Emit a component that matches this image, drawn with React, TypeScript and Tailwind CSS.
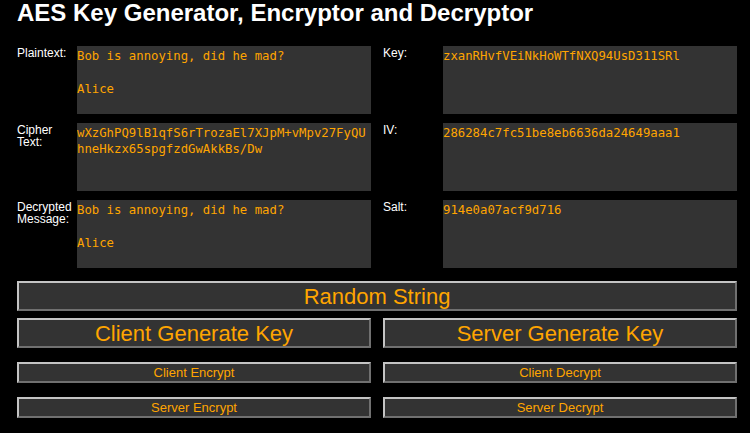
const FIELDS_LEFT = [
  { label: "Plaintext:", value: "Bob is annoying, did he mad?\n\nAlice" },
  { label: "Cipher Text:", value: "wXzGhPQ9lB1qfS6rTrozaEl7XJpM+vMpv27FyQUhneHkzx65spgfzdGwAkkBs/Dw" },
  { label: "Decrypted Message:", value: "Bob is annoying, did he mad?\n\nAlice" },
];

const FIELDS_RIGHT = [
  { label: "Key:", value: "zxanRHvfVEiNkHoWTfNXQ94UsD311SRl" },
  { label: "IV:", value: "286284c7fc51be8eb6636da24649aaa1" },
  { label: "Salt:", value: "914e0a07acf9d716" },
];

function Field({ label, value }: { label: string; value: string }) {
  return (
    <div className="flex">
      <label className="w-[60px] shrink-0 pt-px text-[12px] leading-[12px] text-white">{label}</label>
      <textarea
        readOnly
        value={value}
        className="h-[68px] w-[294px] resize-none overflow-hidden break-all bg-[#333333] p-0 pt-[1.5px] font-['DejaVu_Sans_Mono',monospace] text-[12.3px] leading-[16.5px] text-[#ffa500] outline-none"
      />
    </div>
  );
}

function Button({ children, className }: { children: string; className: string }) {
  return (
    <button
      className={`flex w-full items-center justify-center border-2 border-[#c4c4c4] bg-[#333333] text-[#ffa500] [border-style:outset] ${className}`}
    >
      {children}
    </button>
  );
}

export default function App() {
  return (
    <div className="min-h-[433px] bg-black pl-[17px] font-['Liberation_Sans',Arial,sans-serif]">
      <h1 className="text-[24px] font-bold leading-[26px] text-white">
        AES Key Generator, Encryptor and Decryptor
      </h1>

      <div className="mt-[20px] grid w-[720px] grid-cols-2 gap-x-[12px]">
        <div className="flex flex-col gap-[9px]">
          {FIELDS_LEFT.map((f) => (
            <Field key={f.label} {...f} />
          ))}
        </div>
        <div className="flex flex-col gap-[9px]">
          {FIELDS_RIGHT.map((f) => (
            <Field key={f.label} {...f} />
          ))}
        </div>
      </div>

      <div className="mt-[13px] flex w-[720px] flex-col">
        <Button className="h-[30px] text-[22px]">Random String</Button>
        <div className="mt-[7px] grid grid-cols-2 gap-x-[12px]">
          <Button className="h-[30px] text-[22px]">Client Generate Key</Button>
          <Button className="h-[30px] text-[22px]">Server Generate Key</Button>
        </div>
        <div className="mt-[14px] grid grid-cols-2 gap-x-[12px]">
          <Button className="h-[21px] text-[13px]">Client Encrypt</Button>
          <Button className="h-[21px] text-[13px]">Client Decrypt</Button>
        </div>
        <div className="mt-[14px] grid grid-cols-2 gap-x-[12px]">
          <Button className="h-[21px] text-[13px]">Server Encrypt</Button>
          <Button className="h-[21px] text-[13px]">Server Decrypt</Button>
        </div>
      </div>
    </div>
  );
}
